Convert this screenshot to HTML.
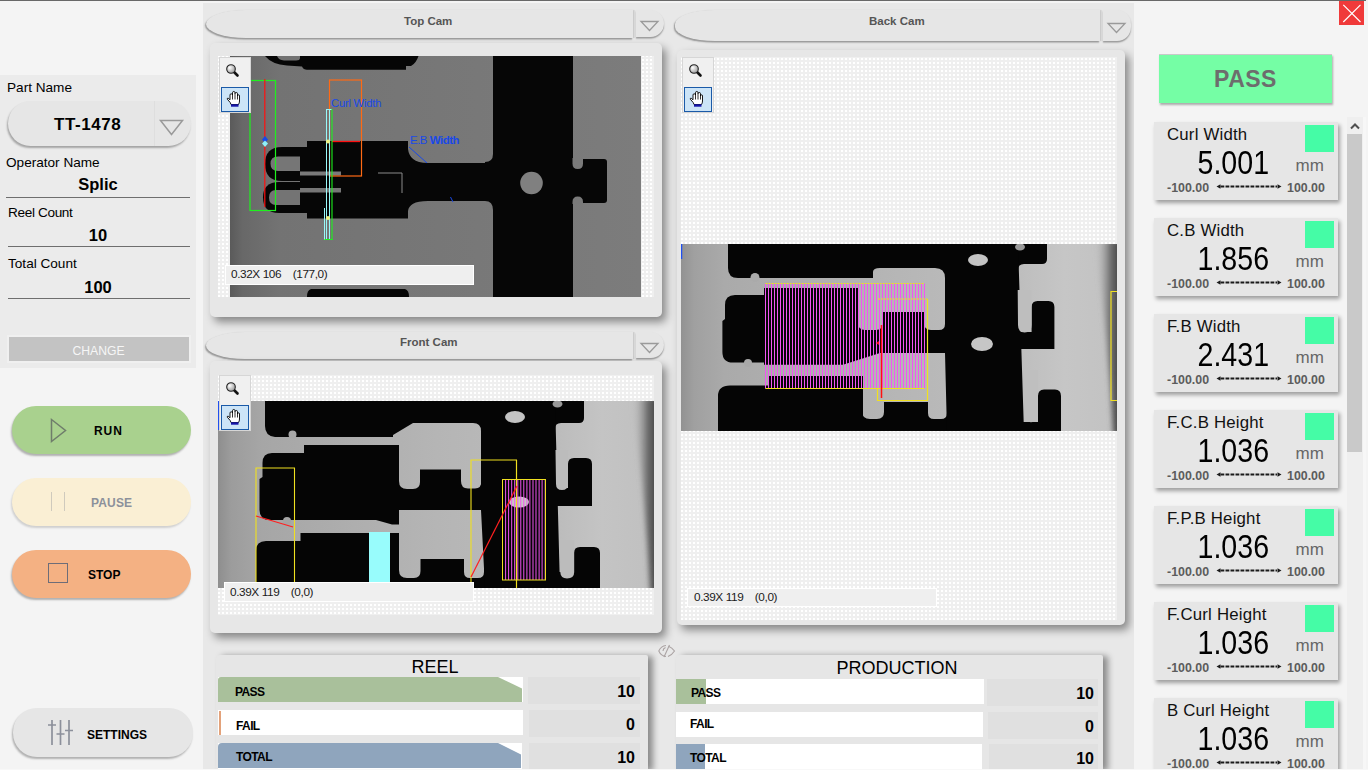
<!DOCTYPE html>
<html><head><meta charset="utf-8">
<style>
*{margin:0;padding:0;box-sizing:border-box}
html,body{width:1368px;height:770px;overflow:hidden;background:#f4f4f4;font-family:"Liberation Sans",sans-serif;color:#000}
.a{position:absolute}
.t{position:absolute;white-space:nowrap;line-height:1}
#topline{left:0;top:0;width:1366px;height:1px;background:#686868}
/* left */
#lbox{left:0;top:75px;width:196px;height:293px;background:#ebebeb}
.lbl{font-size:13.6px;color:#000}
.val{font-size:16.5px;font-weight:bold;text-align:center}
.uline{height:1px;background:#6e6e6e}
.pill{border-radius:24px}
.btn{position:absolute;border-radius:24px;box-shadow:-1px 2px 2px rgba(0,0,0,.28)}
.btxt{position:absolute;font-size:12px;font-weight:bold;line-height:1;white-space:nowrap}
/* middle */
#mid{left:203px;top:3px;width:931px;height:767px;background:#e8e8e8}
.hdr{position:absolute;background:#e6e6e6;border-radius:40px 0 0 40px/14px 0 0 14px;box-shadow:-1px 1.5px 1.5px rgba(0,0,0,.35),1.5px 0 1px rgba(0,0,0,.12)}
.dd{position:absolute;background:#e6e6e6;border-radius:0 14px 14px 0;box-shadow:0 1.5px 1.5px rgba(0,0,0,.35)}
.htxt{position:absolute;font-size:11.5px;font-weight:bold;color:#555;line-height:1;white-space:nowrap}
.card{position:absolute;background:#e7e7e7;border-radius:5px;box-shadow:4px 5px 8px rgba(0,0,0,.42)}
.dots{position:absolute;background-color:#efefef;background-image:linear-gradient(90deg,transparent 0 2px,#efefef 2px 4px),linear-gradient(#fff 0 2px,#efefef 2px 4px);background-size:4px 4px;background-position:0 1px}
.lab{position:absolute;background:#efefef;border:1.5px solid #fff;font-size:11.8px;letter-spacing:-.4px;line-height:1;color:#1a1a1a}
.tool{position:absolute;background:#f0f0f0;border:1px solid #d6d6d6}
.hand{position:absolute;background:#cce4f7;border:1px solid #1a5aa8}
/* right */
.mcard{position:absolute;left:1154px;width:184px;height:78px;background:#e6e6e6;box-shadow:2px 3px 4px rgba(0,0,0,.35)}
.mt{position:absolute;left:13px;top:5px;font-size:16.8px;letter-spacing:.2px;line-height:1;white-space:nowrap;color:#111}
.mv{position:absolute;left:43.5px;top:28.5px;font-size:28.6px;line-height:1;white-space:nowrap;transform:scaleY(1.15);transform-origin:0 100%}
.mu{position:absolute;left:141.5px;top:35px;font-size:17px;color:#666;line-height:1}
.msq{position:absolute;left:151px;top:3px;width:29px;height:27px;background:#45fca6}
.mr{position:absolute;top:59.5px;font-size:12.4px;font-weight:bold;color:#5c5c5c;line-height:1;white-space:nowrap}
/* panels bottom */
.panel{position:absolute;background:#e6e6e6;border-radius:4px 2px 0 0;box-shadow:5px 1px 6px rgba(0,0,0,.4)}
.ptitle{position:absolute;font-size:18px;line-height:1;white-space:nowrap;width:100%;text-align:center}
.bar{position:absolute;height:25px;background:#fff}
.bl{position:absolute;font-size:12px;font-weight:bold;line-height:1;letter-spacing:-.6px}
.vbox{position:absolute;background:#e0e0e0;height:27px}
.vv{position:absolute;right:5px;top:7px;font-size:16px;font-weight:bold;line-height:1}
</style></head><body>
<div id="topline" class="a"></div>

<!-- LEFT PANEL -->
<div id="lbox" class="a"></div>
<div class="t lbl" style="left:7px;top:81px">Part Name</div>
<div class="a" style="left:8px;top:101px;width:183px;height:45px;border-radius:23px;background:#e6e6e6;box-shadow:-1px 2px 2px rgba(0,0,0,.3)"></div>
<div class="a" style="left:154px;top:101px;width:1px;height:45px;background:#dedede"></div>
<div class="t" style="left:54px;top:116px;font-size:17px;font-weight:bold;letter-spacing:.55px">TT-1478</div>
<svg class="a" style="left:158px;top:118px" width="28" height="20"><path d="M2.5 2.5 L24.5 2.5 L13.5 16.5 Z" fill="none" stroke="#9a9a9a" stroke-width="1.5"/></svg>
<div class="t lbl" style="left:6px;top:155.5px">Operator Name</div>
<div class="t val" style="left:0;width:196px;top:176px">Splic</div>
<div class="a uline" style="left:6px;top:197px;width:184px"></div>
<div class="t lbl" style="left:8px;top:205.5px;letter-spacing:-.35px">Reel Count</div>
<div class="t val" style="left:0;width:196px;top:227px">10</div>
<div class="a uline" style="left:8px;top:246px;width:182px"></div>
<div class="t lbl" style="left:8px;top:257px">Total Count</div>
<div class="t val" style="left:0;width:196px;top:279px">100</div>
<div class="a uline" style="left:8px;top:298px;width:182px"></div>
<div class="a" style="left:7px;top:335px;width:184px;height:28px;background:#f0f0f0"></div>
<div class="a" style="left:9px;top:337px;width:180px;height:24px;background:#c3c3c3"></div>
<div class="t" style="left:0;width:197px;text-align:center;top:345px;font-size:12.2px;color:#f6f6f6">CHANGE</div>

<!-- buttons -->
<div class="btn" style="left:12px;top:406px;width:179px;height:48px;background:#a9d18e"></div>
<svg class="a" style="left:49px;top:417px" width="22" height="28"><path d="M2.5 2.5 L16.5 13.5 L2.5 24.5 Z" fill="none" stroke="#6f7d6b" stroke-width="1.5"/></svg>
<div class="btxt" style="left:94px;top:425px;letter-spacing:.9px">RUN</div>

<div class="btn" style="left:12px;top:478px;width:179px;height:48px;background:#faefd4;box-shadow:-1px 2px 2px rgba(0,0,0,.15)"></div>
<div class="a" style="left:51px;top:492px;width:1px;height:19px;background:#cfcabd"></div>
<div class="a" style="left:64px;top:492px;width:1px;height:19px;background:#cfcabd"></div>
<div class="btxt" style="left:91px;top:497px;color:#8c919b;letter-spacing:.15px">PAUSE</div>

<div class="btn" style="left:12px;top:550px;width:179px;height:48px;background:#f4b183"></div>
<div class="a" style="left:48px;top:563px;width:20px;height:20px;border:1.5px solid #6d6d78"></div>
<div class="btxt" style="left:88px;top:569px">STOP</div>

<div class="btn" style="left:13px;top:708px;width:180px;height:49px;background:#e6e6e6"></div>
<svg class="a" style="left:46px;top:718px" width="30" height="30">
<g stroke="#8c909b" stroke-width="1.7" fill="none"><path d="M6 2V27M14.5 2V27M23 2V27M2 7H10M10.5 16H18.5M19 12.5H27"/></g></svg>
<div class="btxt" style="left:87px;top:729px">SETTINGS</div>

<!-- MIDDLE -->
<div id="mid" class="a"></div>
<div class="a" style="left:203px;top:1px;width:931px;height:2px;background:#f4f4f4"></div>

<!-- Top Cam -->
<div class="hdr" style="left:206px;top:10px;width:427px;height:28px"></div>
<div class="dd" style="left:636px;top:10px;width:28px;height:27px"></div>
<div class="htxt" style="left:404px;top:16px">Top Cam</div>
<svg class="a" style="left:639px;top:19px" width="22" height="14"><path d="M2 2.5H19L10.5 11.5Z" fill="none" stroke="#9a9a9a" stroke-width="1.3"/></svg>
<div class="card" style="left:210px;top:43px;width:452px;height:274px"></div>
<div class="dots" style="left:218px;top:56px;width:436px;height:241px;background-position:0 3px"></div>
<svg class="a" id="topimg" style="left:230px;top:56px" width="411" height="241"><defs><linearGradient id="tg" x1="0" x2="1" y1="0" y2="0"><stop offset="0" stop-color="#5a5a5a"/><stop offset="0.03" stop-color="#686868"/><stop offset="0.12" stop-color="#737373"/><stop offset="0.6" stop-color="#787878"/><stop offset="1" stop-color="#7c7c7c"/></linearGradient></defs><g transform="translate(-230,-56)"><rect x="230" y="56" width="411" height="241" fill="url(#tg)"/><path d="M265 56Q272 64.5 287 65.5L302 66.5Q303.5 69.7 307 69.7H406V66H411Q416 63.5 418.5 56Z" fill="#060606"/><path d="M277 56H300V58Q300 60.5 296 60.5H284Q278.5 60 277 56Z" fill="#727272"/><path d="M307 141H408V149C409 157 414 163 428 163H493V201H428C414 201 409 205 408 211V218.5H307V212H300V147H307Z" fill="#060606"/><path d="M282 147H310V181H282Q265 181 265 164Q265 147 282 147Z" fill="#060606"/><path d="M278 156.5H300V171H278Q270.5 171 270.5 163.7Q270.5 156.5 278 156.5Z" fill="#767676"/><rect x="300" y="171.5" width="41" height="4" fill="#7a7a7a"/><path d="M279 182H310V213H279Q263 213 263 197.5Q263 182 279 182Z" fill="#060606"/><path d="M276 190H300V205H276Q269 205 269 197.5Q269 190 276 190Z" fill="#747474"/><rect x="300" y="188" width="41" height="4.5" fill="#767676"/><path d="M378 173H402V193" fill="none" stroke="#8a8a8a" stroke-width="1"/><rect x="493" y="56" width="80" height="241" fill="#060606"/><path d="M485 163H493V154Q493 162 485 162Z" fill="#060606"/><path d="M485 201H493V210Q493 201 485 201Z" fill="#060606"/><path d="M572 159H604Q607 159 607 162V200Q607 203 604 203H572Z" fill="#060606"/><path d="M572.5 158H583V163.5Q583 169 577.75 169Q572.5 169 572.5 163.5Z" fill="#7a7a7a"/><path d="M572.5 204H583V202Q583 196.5 577.75 196.5Q572.5 196.5 572.5 202Z" fill="#7a7a7a"/><circle cx="531.5" cy="183" r="11.3" fill="#808080"/><path d="M311 289H405Q409 290 409 297H307Q307 290 311 289Z" fill="#060606"/><rect x="250" y="80.5" width="25.5" height="130" fill="none" stroke="#1ef01e" stroke-width="1.2"/><path d="M264.8 79V207" stroke="#ff1010" stroke-width="1.2"/><path d="M265 136L268 139.5L265 143L262 139.5Z" fill="#1848e8"/><path d="M265 140.5L268 143.5L265 147L262 143.5Z" fill="#8ef0f8"/><rect x="329.5" y="80" width="32" height="96" fill="none" stroke="#ff6a14" stroke-width="1.2"/><path d="M332 141.5H360" stroke="#ff1010" stroke-width="1.3"/><path d="M326.5 109V240M329.5 109V240" stroke="#98f8f8" stroke-width="1"/><path d="M326.5 109.5H332" stroke="#98f8f8" stroke-width="1"/><path d="M332 109V240" stroke="#1ef01e" stroke-width="1.1"/><path d="M324.5 208V239.5H332" fill="none" stroke="#98f8f8" stroke-width="1"/><path d="M324.5 239.5H332.5" stroke="#1ef01e" stroke-width="1"/><circle cx="328" cy="141.5" r="2" fill="#f0f080"/><circle cx="328" cy="218" r="2" fill="#f0f080"/><text x="331" y="106.5" font-family="Liberation Sans" font-size="11.2" fill="#1a4ae8" letter-spacing="-0.2">Curl Width</text><text x="410" y="143.5" font-family="Liberation Sans" font-size="11.5" fill="#1a4ae8" letter-spacing="-0.5">E.B <tspan font-weight="bold">Width</tspan></text><path d="M409 147L427 163" stroke="#1a4ae8" stroke-width="1"/><path d="M450.5 197L453 202" stroke="#1a4ae8" stroke-width="1"/></g></svg>
<div class="lab" style="left:225px;top:265px;width:249px;height:20px"><span class="t" style="left:5px;top:3px">0.32X 106&nbsp;&nbsp;&nbsp;&nbsp;(177,0)</span></div>
<div class="tool" style="left:219px;top:57px;width:32px;height:56px"></div>
<div class="hand" style="left:221px;top:87px;width:28px;height:25px"></div><svg class="a" style="left:225px;top:63px" width="16" height="16"><defs><radialGradient id="mg0" cx=".35" cy=".35" r=".7"><stop offset="0" stop-color="#fff"/><stop offset="1" stop-color="#9a9a9a"/></radialGradient></defs><path d="M8.5 8.5L12.5 12.5" stroke="#111" stroke-width="2.6" stroke-linecap="round"/><circle cx="6" cy="6" r="4.3" fill="url(#mg0)" stroke="#222" stroke-width="1.1"/></svg><svg class="a" style="left:226px;top:90px" width="16" height="18"><path d="M5 14.5L4.2 12.5L1.3 9.2Q0.9 8 2.2 8.2L4 9.8V5Q4 3.8 5.25 3.8Q6.5 3.8 6.5 5V2.7Q6.5 1.5 7.75 1.5Q9 1.5 9 2.7V3.7Q9 2.5 10.25 2.5Q11.5 2.5 11.5 3.7V6Q11.5 4.8 12.5 4.8Q13.5 4.8 13.5 6V11Q13.5 13 12.5 14.5Z" fill="#fff" stroke="#000" stroke-width=".9"/><path d="M6.5 5V9.5M9 3.7V9.5M11.5 6V9.5" stroke="#000" stroke-width=".8"/><rect x="5" y="14.3" width="7.5" height="2.4" fill="#1414a8"/></svg>

<!-- Front Cam -->
<div class="hdr" style="left:206px;top:332px;width:427px;height:27px"></div>
<div class="dd" style="left:636px;top:332px;width:28px;height:26px"></div>
<div class="htxt" style="left:400px;top:337px">Front Cam</div>
<svg class="a" style="left:639px;top:341px" width="22" height="14"><path d="M2 2.5H19L10.5 11.5Z" fill="none" stroke="#9a9a9a" stroke-width="1.3"/></svg>
<div class="card" style="left:210px;top:361px;width:452px;height:272px"></div>
<div class="dots" style="left:218px;top:375px;width:436px;height:240px"></div>
<svg class="a" id="frontimg" style="left:218px;top:401px" width="436" height="187"><defs><linearGradient id="fg" x1="0" x2="1" y1="0" y2="0"><stop offset="0" stop-color="#8e8e8e"/><stop offset="0.03" stop-color="#9c9c9c"/><stop offset="0.1" stop-color="#a6a6a6"/><stop offset="0.5" stop-color="#b5b5b5"/><stop offset="0.78" stop-color="#bcbcbc"/><stop offset="0.88" stop-color="#c4c4c4"/><stop offset="1" stop-color="#c0c0c0"/></linearGradient><linearGradient id="fe" x1="0" x2="1" y1="0" y2="0"><stop offset="0" stop-color="#c0c0c0" stop-opacity="0"/><stop offset="0.55" stop-color="#606060" stop-opacity=".85"/><stop offset="1" stop-color="#303030"/></linearGradient><filter id="fb" x="-50%" y="-10%" width="200%" height="120%"><feGaussianBlur stdDeviation="2.5"/></filter></defs><g transform="translate(-218,-401)"><rect x="218" y="401" width="436" height="187" fill="url(#fg)"/><path d="M632 398H660V592H650Q645 490 632 398Z" fill="url(#fe)" filter="url(#fb)"/><path d="M265 401H584V418Q584 423 579 423H413L393 435V437H275Q265 436 265 426Z" fill="#050505"/><path d="M272 453H304V445H399V481Q399 489 407 489H413Q420 489 420 482V469.5H461V481Q461 488.5 468 488.5H475Q481.5 488.5 481.5 481H486V510H399V524.5L392 524.5L376 520H270Q259.5 520 259.5 510V479L262.5 477V463Q262.5 453 272 453Z" fill="#050505"/><circle cx="287" cy="521" r="4" fill="#a4a4a4"/><circle cx="292.5" cy="434.5" r="4" fill="#a6a6a6"/><path d="M300.5 533H399V588H256V551Q256 541 266 541H300.5Z" fill="#050505"/><path d="M399 570Q399 578 407 578H414Q420.5 578 420.5 571V559H464V572Q464 578 470 578H478Q484 578 484 572V510H487V588H399Z" fill="#050505"/><path d="M480.5 401H555L560 588H485L481 510V401Z" fill="#050505"/><path d="M473 423H481V431Q481 423 473 423Z" fill="#050505"/><path d="M555 488H568V464Q568 458 574 458H586Q592 458 592 464V506H555Z" fill="#050505"/><path d="M555.5 450H568V484Q568 490 562 490Q556 490 556 484Z" fill="#bcbcbc"/><path d="M559 572H574V553Q574 547 580 547H594Q600 547 600 553V588H559Z" fill="#050505"/><path d="M559.5 540H574.2V572Q574.2 578.5 567 578.5Q560.5 578.5 560.3 572Z" fill="#bcbcbc"/><path d="M561 423H555V429Q555 423 561 423Z" fill="#050505"/><ellipse cx="515" cy="417" rx="10" ry="6" fill="#c4c4c4"/><ellipse cx="557.5" cy="404" rx="5" ry="3.5" fill="#9a9a9a"/><rect x="369" y="532" width="21" height="50" fill="#98fcfc"/><path d="M256 588V468H294.5V588" fill="none" stroke="#f0e020" stroke-width="1.1"/><path d="M256 516L293 527" stroke="#ff2020" stroke-width="1.2"/><path d="M471 588V460H516.5V588" fill="none" stroke="#f0e020" stroke-width="1.1"/><ellipse cx="519" cy="502" rx="10" ry="5.5" fill="#c8cac4"/><path d="M502.5 479.5V580M505.6 479.5V580M508.6 479.5V580M511.7 479.5V580M514.7 479.5V580M517.8 479.5V580M520.8 479.5V580M523.8 479.5V580M526.9 479.5V580M529.9 479.5V580M533.0 479.5V580M536.0 479.5V580M539.1 479.5V580M542.1 479.5V580M545.2 479.5V580" stroke="#f255f2" stroke-width="1.0" fill="none"/><rect x="502.5" y="479.5" width="43" height="100.5" fill="none" stroke="#f0e020" stroke-width="1"/><path d="M516.5 460V588" stroke="#f0e020" stroke-width="1.1"/><path d="M471 577L517 486" stroke="#ff2020" stroke-width="1.2"/><path d="M218.75 401V430" stroke="#2050f0" stroke-width="1.5"/></g></svg>
<div class="lab" style="left:224px;top:582px;width:250px;height:20px"><span class="t" style="left:5px;top:4px">0.39X 119&nbsp;&nbsp;&nbsp;&nbsp;(0,0)</span></div>
<div class="tool" style="left:219px;top:375px;width:32px;height:56px"></div>
<div class="hand" style="left:221px;top:405px;width:28px;height:25px"></div><svg class="a" style="left:225px;top:381px" width="16" height="16"><defs><radialGradient id="mg1" cx=".35" cy=".35" r=".7"><stop offset="0" stop-color="#fff"/><stop offset="1" stop-color="#9a9a9a"/></radialGradient></defs><path d="M8.5 8.5L12.5 12.5" stroke="#111" stroke-width="2.6" stroke-linecap="round"/><circle cx="6" cy="6" r="4.3" fill="url(#mg1)" stroke="#222" stroke-width="1.1"/></svg><svg class="a" style="left:226px;top:408px" width="16" height="18"><path d="M5 14.5L4.2 12.5L1.3 9.2Q0.9 8 2.2 8.2L4 9.8V5Q4 3.8 5.25 3.8Q6.5 3.8 6.5 5V2.7Q6.5 1.5 7.75 1.5Q9 1.5 9 2.7V3.7Q9 2.5 10.25 2.5Q11.5 2.5 11.5 3.7V6Q11.5 4.8 12.5 4.8Q13.5 4.8 13.5 6V11Q13.5 13 12.5 14.5Z" fill="#fff" stroke="#000" stroke-width=".9"/><path d="M6.5 5V9.5M9 3.7V9.5M11.5 6V9.5" stroke="#000" stroke-width=".8"/><rect x="5" y="14.3" width="7.5" height="2.4" fill="#1414a8"/></svg>

<!-- Back Cam -->
<div class="hdr" style="left:675px;top:10px;width:425px;height:31px"></div>
<div class="dd" style="left:1103px;top:10px;width:28px;height:31px"></div>
<div class="htxt" style="left:869px;top:16px">Back Cam</div>
<svg class="a" style="left:1106px;top:21px" width="22" height="14"><path d="M2 2.5H19L10.5 11.5Z" fill="none" stroke="#9a9a9a" stroke-width="1.3"/></svg>
<div class="card" style="left:677px;top:50px;width:448px;height:575px"></div>
<div class="dots" style="left:681px;top:57px;width:436px;height:563px"></div>
<svg class="a" id="backimg" style="left:681px;top:244px" width="436" height="187"><defs><linearGradient id="bg" x1="0" x2="1" y1="0" y2="0"><stop offset="0" stop-color="#929292"/><stop offset="0.03" stop-color="#a0a0a0"/><stop offset="0.1" stop-color="#aaaaaa"/><stop offset="0.5" stop-color="#b6b6b6"/><stop offset="0.78" stop-color="#bebebe"/><stop offset="0.88" stop-color="#c6c6c6"/><stop offset="1" stop-color="#c2c2c2"/></linearGradient><linearGradient id="be" x1="0" x2="1" y1="0" y2="0"><stop offset="0" stop-color="#c0c0c0" stop-opacity="0"/><stop offset="0.55" stop-color="#606060" stop-opacity=".85"/><stop offset="1" stop-color="#303030"/></linearGradient><filter id="bb" x="-50%" y="-10%" width="200%" height="120%"><feGaussianBlur stdDeviation="2.5"/></filter></defs><g transform="translate(-681,-244)"><rect x="681" y="244" width="436" height="187" fill="url(#bg)"/><path d="M1095 241H1123V435H1113Q1108 333 1095 241Z" fill="url(#be)" filter="url(#bb)"/><path d="M728 244H1047V259Q1047 264 1042 264H945V268H880Q873 268 873 272V278H738Q728 278 728 268Z" fill="#050505"/><path d="M735 295H764V288H858V323Q858 330 865 330H876Q883 330 883 323V312H924V323Q924 330 931 330H939Q945 330 945 324H948V353H880L843 364.7H764V362.6H733Q722.4 362.6 722.4 352V321L725 319V305Q725 295 735 295Z" fill="#050505"/><circle cx="755" cy="277.5" r="4.5" fill="#aaaaaa"/><circle cx="748" cy="363" r="4" fill="#a8a8a8"/><path d="M768.6 376H863V432H718V396Q718 385.5 730 385.5H768.6Z" fill="#050505"/><path d="M862 411Q862 419 870 419H877Q884 419 884 412V402H928V413Q928 419 934 419H941Q947 419 947 413V353H950V432H862Z" fill="#050505"/><path d="M944.5 244H1018L1024 432H947L945 353V244Z" fill="#050505"/><path d="M935 268H945V278Q945 268 935 268Z" fill="#050505"/><path d="M1017 332H1031.6V307Q1031.6 301 1037.6 301H1048.4Q1054.4 301 1054.4 307V349H1017Z" fill="#050505"/><path d="M1017.7 290H1031.6V325Q1031.6 332.4 1024.6 332.4Q1018 332.4 1018 325Z" fill="#bebebe"/><path d="M1022 422H1038V396Q1038 389.4 1044 389.4H1055Q1061 389.4 1061 396V432H1022Z" fill="#050505"/><path d="M1023.5 370H1038V415Q1038 422.3 1031 422.3Q1024.5 422.3 1024.3 415Z" fill="#bfbfbf"/><path d="M1024 264H1018V270Q1018 264 1024 264Z" fill="#050505"/><ellipse cx="978" cy="260" rx="10" ry="6" fill="#c4c4c4"/><ellipse cx="982" cy="344" rx="11" ry="7" fill="#c6c6c6"/><ellipse cx="1020" cy="247" rx="5" ry="3.5" fill="#9a9a9a"/><path d="M765.5 283.5V388.5M768.5 283.5V388.5M771.5 283.5V388.5M774.5 283.5V388.5M777.5 283.5V388.5M780.5 283.5V388.5M783.5 283.5V388.5M786.5 283.5V388.5M789.5 283.5V388.5M792.5 283.5V388.5M795.5 283.5V388.5M798.5 283.5V388.5M801.5 283.5V388.5M804.5 283.5V388.5M807.5 283.5V388.5M810.5 283.5V388.5M813.5 283.5V388.5M816.5 283.5V388.5M819.5 283.5V388.5M822.5 283.5V388.5M825.5 283.5V388.5M828.5 283.5V388.5M831.5 283.5V388.5M834.5 283.5V388.5M837.5 283.5V388.5M840.5 283.5V388.5M843.5 283.5V388.5M846.5 283.5V388.5M849.5 283.5V388.5M852.5 283.5V388.5M855.5 283.5V388.5M858.5 283.5V388.5M861.5 283.5V388.5M864.5 283.5V388.5M867.5 283.5V388.5M870.5 283.5V388.5M873.5 283.5V388.5M876.5 283.5V388.5M879.5 283.5V388.5M882.5 283.5V388.5M885.5 283.5V388.5M888.5 283.5V388.5M891.5 283.5V388.5M894.5 283.5V388.5M897.5 283.5V388.5M900.5 283.5V388.5M903.5 283.5V388.5M906.5 283.5V388.5M909.5 283.5V388.5M912.5 283.5V388.5M915.5 283.5V388.5M918.5 283.5V388.5M921.5 283.5V388.5M924.5 283.5V388.5" stroke="#f255f2" stroke-width="1.0" fill="none"/><path d="M765.5 283.5H924.5" stroke="#f0e020" stroke-width="1" stroke-dasharray="2 1"/><path d="M765.5 388.5H924.5" stroke="#f0e020" stroke-width="1"/><path d="M878 299H927.5" stroke="#f0e020" stroke-width="1" stroke-dasharray="2 1"/><path d="M927.5 299V400.5H877.5V388" fill="none" stroke="#f0e020" stroke-width="1.2"/><path d="M881.5 325V398" stroke="#ff1010" stroke-width="1.5"/><path d="M876 343L879 341V345Z" fill="#ff1010"/><path d="M1117 291.5H1111V400.5H1117" fill="none" stroke="#f0e020" stroke-width="1.2"/><path d="M681.5 244V259" stroke="#2050f0" stroke-width="1.5"/></g></svg>
<div class="lab" style="left:687px;top:588px;width:250px;height:19px"><span class="t" style="left:6px;top:3px">0.39X 119&nbsp;&nbsp;&nbsp;&nbsp;(0,0)</span></div>
<div class="tool" style="left:682px;top:57px;width:32px;height:56px"></div>
<div class="hand" style="left:684px;top:87px;width:28px;height:25px"></div><svg class="a" style="left:688px;top:63px" width="16" height="16"><defs><radialGradient id="mg2" cx=".35" cy=".35" r=".7"><stop offset="0" stop-color="#fff"/><stop offset="1" stop-color="#9a9a9a"/></radialGradient></defs><path d="M8.5 8.5L12.5 12.5" stroke="#111" stroke-width="2.6" stroke-linecap="round"/><circle cx="6" cy="6" r="4.3" fill="url(#mg2)" stroke="#222" stroke-width="1.1"/></svg><svg class="a" style="left:689px;top:90px" width="16" height="18"><path d="M5 14.5L4.2 12.5L1.3 9.2Q0.9 8 2.2 8.2L4 9.8V5Q4 3.8 5.25 3.8Q6.5 3.8 6.5 5V2.7Q6.5 1.5 7.75 1.5Q9 1.5 9 2.7V3.7Q9 2.5 10.25 2.5Q11.5 2.5 11.5 3.7V6Q11.5 4.8 12.5 4.8Q13.5 4.8 13.5 6V11Q13.5 13 12.5 14.5Z" fill="#fff" stroke="#000" stroke-width=".9"/><path d="M6.5 5V9.5M9 3.7V9.5M11.5 6V9.5" stroke="#000" stroke-width=".8"/><rect x="5" y="14.3" width="7.5" height="2.4" fill="#1414a8"/></svg>

<!-- REEL -->
<div class="panel" style="left:216px;top:655px;width:432px;height:115px">
  <div class="ptitle" style="left:0;top:3px;width:438px">REEL</div>
</div>
<div class="bar" style="left:218px;top:677px;width:305px;height:25px;background:#fff"></div>
<svg class="a" style="left:218px;top:677px" width="305" height="25"><path d="M3 0H280L304 11.5V25H0V3Q0 0 3 0Z" fill="#a9c09b"/></svg>
<div class="bl" style="left:235px;top:686px">PASS</div>
<div class="vbox" style="left:528px;top:677px;width:112px"><div class="vv">10</div></div>
<div class="bar" style="left:218px;top:710px;width:305px;height:25px"></div>
<div class="a" style="left:219px;top:711px;width:2px;height:24px;background:#e3a27a"></div>
<div class="bl" style="left:236px;top:720px">FAIL</div>
<div class="vbox" style="left:529px;top:710px;width:111px"><div class="vv">0</div></div>
<div class="bar" style="left:218px;top:743px;width:304px;height:27px"></div>
<svg class="a" style="left:218px;top:743px" width="304" height="27"><path d="M4 0H280L303 11.5V25H0V4Q0 0 4 0Z" fill="#8fa5bd"/></svg>
<div class="bl" style="left:236px;top:751px">TOTAL</div>
<div class="vbox" style="left:529px;top:743px;width:111px"><div class="vv">10</div></div>

<!-- eye icon -->
<svg class="a" style="left:657px;top:643px" width="20" height="16"><g fill="none" stroke="#aba3a3" stroke-width="1.1"><path d="M9 2.5Q4 3 1.8 8Q4 13 9 13.5"/><path d="M11.5 3.2Q15 4.5 17.5 8Q15 12 11 13.4"/><path d="M6 8Q6 5.5 8.5 4.5M7 14L12.5 2"/></g></svg>

<!-- PRODUCTION -->
<div class="panel" style="left:676px;top:655px;width:427px;height:115px">
  <div class="ptitle" style="left:0;top:4px;width:442px">PRODUCTION</div>
</div>
<div class="bar" style="left:676px;top:679px;width:308px;height:25px"></div>
<div class="a" style="left:676px;top:679px;width:30px;height:25px;background:#a9c09b"></div>
<div class="bl" style="left:691px;top:687px">PASS</div>
<div class="vbox" style="left:987px;top:679px;width:111px"><div class="vv" style="right:4px">10</div></div>
<div class="bar" style="left:676px;top:712px;width:307px;height:25px"></div>
<div class="bl" style="left:690px;top:718px">FAIL</div>
<div class="vbox" style="left:988px;top:712px;width:110px"><div class="vv" style="right:4px">0</div></div>
<div class="bar" style="left:676px;top:744px;width:306px;height:26px"></div>
<div class="a" style="left:676px;top:744px;width:29px;height:26px;background:#8fa5bd"></div>
<div class="bl" style="left:690px;top:752px">TOTAL</div>
<div class="vbox" style="left:989px;top:744px;width:109px"><div class="vv" style="right:4px">10</div></div>

<div class="a" style="left:1134px;top:1px;width:234px;height:769px;background:#f4f4f4"></div>
<!-- RIGHT -->
<div class="a" style="left:1339px;top:1px;width:25px;height:24px;background:#f03a3a"></div>
<svg class="a" style="left:1339px;top:1px" width="25" height="24"><path d="M4.3 3.8L21.5 21M21.5 3.8L4.3 21" stroke="#fff" stroke-width="1.2"/></svg>
<div class="a" style="left:1159px;top:54px;width:173px;height:49px;background:#75fea5;border-top:1px solid #c9c9c9;box-shadow:1px 2px 2px rgba(0,0,0,.3)"></div>
<div class="t" style="left:1159px;width:173px;text-align:center;top:68px;font-size:23px;font-weight:bold;color:#6d6d6d;letter-spacing:.5px">PASS</div>

<!-- RIGHT CARDS -->
<div class="a" style="left:1347px;top:117px;width:16px;height:653px;background:#efefef"></div>
<div class="a" style="left:1363px;top:117px;width:3px;height:653px;background:#f7f7f7"></div>
<svg class="a" style="left:1349px;top:121px" width="12" height="10"><path d="M2 7.5L6 3.5L10 7.5" fill="none" stroke="#505050" stroke-width="2"/></svg>
<div class="a" style="left:1347px;top:134px;width:15px;height:318px;background:#c9c9c9"></div>
<div class="mcard" style="top:122px"><div class="mt">Curl Width</div><div class="msq"></div><div class="mv">5.001</div><div class="mu">mm</div><div class="mr" style="left:13px">-100.00</div><svg class="a" style="left:62px;top:61px" width="66" height="7"><path d="M4.5 3.5H61" stroke="#1a1a1a" stroke-width="2" stroke-dasharray="3.8 1.2"/><path d="M0.5 3.5L4.5 1.2V5.8Z M65.5 3.5L61.5 1.2V5.8Z" fill="#1a1a1a"/></svg><div class="mr" style="left:133px">100.00</div></div>
<div class="mcard" style="top:218px"><div class="mt">C.B Width</div><div class="msq"></div><div class="mv">1.856</div><div class="mu">mm</div><div class="mr" style="left:13px">-100.00</div><svg class="a" style="left:62px;top:61px" width="66" height="7"><path d="M4.5 3.5H61" stroke="#1a1a1a" stroke-width="2" stroke-dasharray="3.8 1.2"/><path d="M0.5 3.5L4.5 1.2V5.8Z M65.5 3.5L61.5 1.2V5.8Z" fill="#1a1a1a"/></svg><div class="mr" style="left:133px">100.00</div></div>
<div class="mcard" style="top:314px"><div class="mt">F.B Width</div><div class="msq"></div><div class="mv">2.431</div><div class="mu">mm</div><div class="mr" style="left:13px">-100.00</div><svg class="a" style="left:62px;top:61px" width="66" height="7"><path d="M4.5 3.5H61" stroke="#1a1a1a" stroke-width="2" stroke-dasharray="3.8 1.2"/><path d="M0.5 3.5L4.5 1.2V5.8Z M65.5 3.5L61.5 1.2V5.8Z" fill="#1a1a1a"/></svg><div class="mr" style="left:133px">100.00</div></div>
<div class="mcard" style="top:410px"><div class="mt">F.C.B Height</div><div class="msq"></div><div class="mv">1.036</div><div class="mu">mm</div><div class="mr" style="left:13px">-100.00</div><svg class="a" style="left:62px;top:61px" width="66" height="7"><path d="M4.5 3.5H61" stroke="#1a1a1a" stroke-width="2" stroke-dasharray="3.8 1.2"/><path d="M0.5 3.5L4.5 1.2V5.8Z M65.5 3.5L61.5 1.2V5.8Z" fill="#1a1a1a"/></svg><div class="mr" style="left:133px">100.00</div></div>
<div class="mcard" style="top:506px"><div class="mt">F.P.B Height</div><div class="msq"></div><div class="mv">1.036</div><div class="mu">mm</div><div class="mr" style="left:13px">-100.00</div><svg class="a" style="left:62px;top:61px" width="66" height="7"><path d="M4.5 3.5H61" stroke="#1a1a1a" stroke-width="2" stroke-dasharray="3.8 1.2"/><path d="M0.5 3.5L4.5 1.2V5.8Z M65.5 3.5L61.5 1.2V5.8Z" fill="#1a1a1a"/></svg><div class="mr" style="left:133px">100.00</div></div>
<div class="mcard" style="top:602px"><div class="mt">F.Curl Height</div><div class="msq"></div><div class="mv">1.036</div><div class="mu">mm</div><div class="mr" style="left:13px">-100.00</div><svg class="a" style="left:62px;top:61px" width="66" height="7"><path d="M4.5 3.5H61" stroke="#1a1a1a" stroke-width="2" stroke-dasharray="3.8 1.2"/><path d="M0.5 3.5L4.5 1.2V5.8Z M65.5 3.5L61.5 1.2V5.8Z" fill="#1a1a1a"/></svg><div class="mr" style="left:133px">100.00</div></div>
<div class="mcard" style="top:698px"><div class="mt">B Curl Height</div><div class="msq"></div><div class="mv">1.036</div><div class="mu">mm</div><div class="mr" style="left:13px">-100.00</div><svg class="a" style="left:62px;top:61px" width="66" height="7"><path d="M4.5 3.5H61" stroke="#1a1a1a" stroke-width="2" stroke-dasharray="3.8 1.2"/><path d="M0.5 3.5L4.5 1.2V5.8Z M65.5 3.5L61.5 1.2V5.8Z" fill="#1a1a1a"/></svg><div class="mr" style="left:133px">100.00</div></div>
<div class="a" style="left:0;top:769px;width:1368px;height:1px;background:#f8f8f8;z-index:5"></div>
</body></html>
